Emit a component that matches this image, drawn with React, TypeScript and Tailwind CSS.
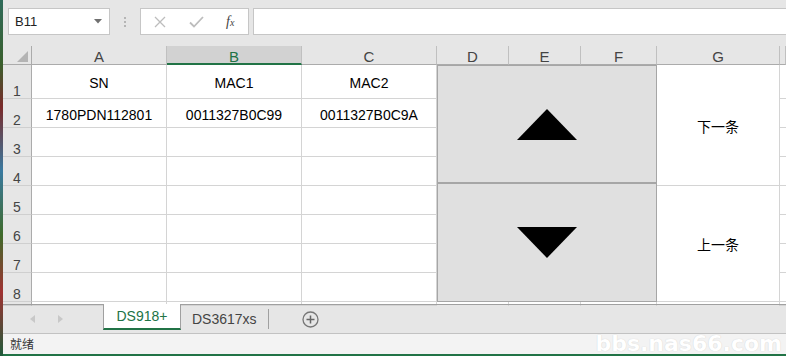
import React from 'react';

const grid = 'border-r border-b border-[#d4d4d4]';

function RowHead({ n }: { n: number }) {
  return (
    <div className="flex items-end justify-center overflow-hidden border-r border-b border-r-[#ababab] border-b-[#cfcfcf] bg-[#e6e6e6] pb-[1px] leading-[12px] text-[#444]">
      {n < 9 ? n : null}
    </div>
  );
}

function Cell({ children }: { children?: React.ReactNode }) {
  return <div className={`${grid} flex items-center justify-center pt-[3px] leading-[16px]`}>{children}</div>;
}

function Triangle({ down }: { down?: boolean }) {
  return (
    <svg width="60" height="31" viewBox="0 0 60 31">
      <polygon points={down ? '0,0 60,0 30,31' : '30,0 60,31 0,31'} fill="#000" />
    </svg>
  );
}

export default function App() {
  const heads = ['A', 'B', 'C', 'D', 'E', 'F', 'G', ''];
  const rows = [
    ['SN', 'MAC1', 'MAC2'],
    ['1780PDN112801', '0011327B0C99', '0011327B0C9A'],
  ];

  return (
    <div className="flex h-[356px] w-[786px] overflow-hidden font-['Liberation_Sans','Noto_Sans_CJK_SC',sans-serif] text-[14px] text-black">
      <div className="w-[3px] shrink-0 bg-[linear-gradient(180deg,#2f6b5a_0%,#3a5f2c_18%,#7a2a2a_30%,#3a7aa0_48%,#3f6a2a_66%,#a03232_82%,#1f5a3a_100%)]" />

      <div className="flex min-w-0 flex-1 flex-col bg-[#e6e6e6]">
        {/* Formula bar */}
        <div className="flex h-[46px] shrink-0 items-start pt-[8px] pl-[5px]">
          <div className="flex h-[27px] w-[102px] items-center justify-between border border-[#c6c6c6] bg-white pl-[6px] pr-[7px] text-[13px] text-[#222]">
            <span>B11</span>
            <svg width="8" height="5" viewBox="0 0 8 5">
              <polygon points="0,0 8,0 4,4.5" fill="#707070" />
            </svg>
          </div>
          <div className="flex h-[27px] w-[30px] flex-col items-center justify-center gap-[2px]">
            <span className="h-[2px] w-[2px] bg-[#b5b5b5]" />
            <span className="h-[2px] w-[2px] bg-[#b5b5b5]" />
            <span className="h-[2px] w-[2px] bg-[#b5b5b5]" />
          </div>
          <div className="flex h-[27px] w-[109px] items-center border border-[#c6c6c6] bg-white">
            <svg className="ml-[13px]" width="12" height="12" viewBox="0 0 12 12">
              <path d="M1 1L11 11M11 1L1 11" stroke="#bdbdbd" strokeWidth="1.3" />
            </svg>
            <svg className="ml-[23px]" width="15" height="12" viewBox="0 0 15 12">
              <path d="M1 6.5L5 10.5L14 1" stroke="#bdbdbd" strokeWidth="1.8" fill="none" />
            </svg>
            <span className="ml-[22px] font-['Liberation_Serif',serif] text-[14px] italic text-[#444]">
              f<span className="text-[10px]">x</span>
            </span>
          </div>
          <div className="ml-[4px] -mr-[2px] h-[27px] flex-1 border border-[#c6c6c6] bg-white" />
        </div>

        {/* Sheet grid */}
        <div className="grid h-[258px] shrink-0 grid-cols-[29px_135px_135px_135px_72px_72px_76px_123px_1fr] grid-rows-[19px_34px_repeat(7,29px)_1fr] bg-white">
          <div className="flex items-end justify-end border-r border-b border-[#ababab] bg-[#e6e6e6] pr-[3px] pb-[2px]">
            <svg width="11" height="11" viewBox="0 0 11 11">
              <polygon points="11,0 11,11 0,11" fill="#b4b4b4" />
            </svg>
          </div>
          {heads.map((h, i) =>
            h === 'B' ? (
              <div key={i} className="flex items-end justify-center border-r border-b-2 border-r-[#c0c0c0] border-b-[#217346] bg-[#d2d2d2] text-[15px] leading-[13px] text-[#217346]">
                {h}
              </div>
            ) : (
              <div key={i} className="flex items-end justify-center border-r border-b border-r-[#c0c0c0] border-b-[#ababab] bg-[#e6e6e6] pb-[1px] text-[15px] leading-[13px] text-[#444]">
                {h}
              </div>
            ),
          )}

          {[1, 2, 3, 4, 5, 6, 7, 8, 9].map((r) => (
            <React.Fragment key={r}>
              <RowHead n={r} />
              <Cell>{rows[r - 1]?.[0]}</Cell>
              <Cell>{rows[r - 1]?.[1]}</Cell>
              <Cell>{rows[r - 1]?.[2]}</Cell>
              {r === 1 && (
                <div className="col-span-3 col-start-5 row-span-8 flex flex-col">
                  <div className="flex h-[118px] items-center justify-center border border-[#a6a6a6] bg-[#e0e0e0]">
                    <Triangle />
                  </div>
                  <div className="flex flex-1 items-center justify-center border border-[#a6a6a6] bg-[#e0e0e0]">
                    <Triangle down />
                  </div>
                </div>
              )}
              {r === 9 && (
                <>
                  <div className="border-r border-[#d4d4d4]" />
                  <div className="border-r border-[#d4d4d4]" />
                  <div className="border-r border-[#d4d4d4]" />
                </>
              )}
              {r === 1 && (
                <div className={`${grid} col-start-8 row-span-4 flex items-center justify-center pt-[4px]`}>下一条</div>
              )}
              {r === 5 && (
                <div className={`${grid} col-start-8 row-span-4 flex items-center justify-center pt-[4px]`}>上一条</div>
              )}
              {r === 9 && <div className="border-r border-[#d4d4d4]" />}
              <div className="border-b border-[#d4d4d4]" />
            </React.Fragment>
          ))}
        </div>

        {/* Sheet tabs */}
        <div className="flex h-[29px] shrink-0 items-start">
          <div className="flex h-full w-[100px] items-center gap-[23px] border-t border-[#a0a0a0] pl-[27px]">
            <svg width="5" height="8" viewBox="0 0 5 8">
              <polygon points="5,0 5,8 0,4" fill="#c8c8c8" />
            </svg>
            <svg width="5" height="8" viewBox="0 0 5 8">
              <polygon points="0,0 0,8 5,4" fill="#c8c8c8" />
            </svg>
          </div>
          <div className="flex h-[26px] w-[78px] items-center justify-center border-x border-b-2 border-x-[#a0a0a0] border-b-[#217346] bg-white text-[#217346]">
            DS918+
          </div>
          <div className="flex h-full flex-1 items-center border-t border-[#a0a0a0]">
            <span className="pl-[11px] text-[#444]">DS3617xs</span>
            <span className="ml-[11px] h-[20px] w-px bg-[#a0a0a0]" />
            <svg className="ml-[33px]" width="17" height="17" viewBox="0 0 17 17">
              <circle cx="8.5" cy="8.5" r="7.5" stroke="#777" strokeWidth="1.3" fill="none" />
              <path d="M8.5 4.5V12.5M4.5 8.5H12.5" stroke="#666" strokeWidth="1.5" />
            </svg>
          </div>
        </div>

        {/* Status bar */}
        <div className="relative flex flex-1 items-center border-t border-b-2 border-t-[#c2c2c2] border-b-[#217346] bg-[#f3f3f3] pl-[7px] text-[12px] text-[#333]">
          <span className="font-['Noto_Sans_CJK_SC',sans-serif]">就绪</span>
          <span className="absolute right-[4px] top-[-1px] font-['DejaVu_Sans',sans-serif] text-[22px] font-bold leading-none text-white [text-shadow:0_0_1px_#c8c8c8]">
            bbs.nas66.com
          </span>
        </div>
      </div>
    </div>
  );
}
